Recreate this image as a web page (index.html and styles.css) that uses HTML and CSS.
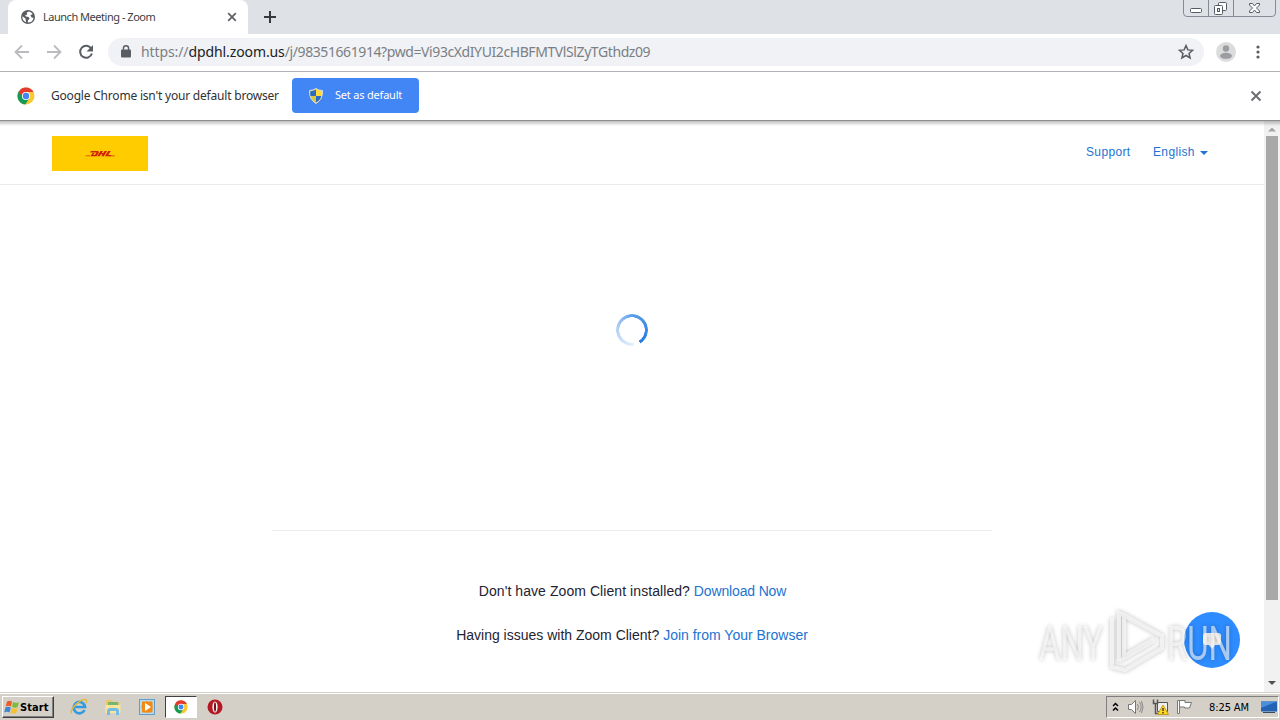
FILE: index.html
```html
<!DOCTYPE html>
<html lang="en">
<head>
    <meta charset="UTF-8">
    <title>Launch Meeting - Zoom</title>
    <link rel="stylesheet" href="styles.css">
</head>
<body>
    <svg class="defs" width="0" height="0">
        <symbol id="chrome" viewBox="0 0 18 18">
            <circle cx="9" cy="9" r="8.5" fill="#fbc834"/>
            <path d="M9 9L1.6 4.7A8.5 8.5 0 0 0 8.3 17.5L12.7 10.8z" fill="#149b58"/>
            <path d="M9 9L5 9.6 1.6 4.7A8.5 8.5 0 0 1 16.5 5H9z" fill="#e33b2e"/>
            <circle cx="9" cy="9" r="4.1" fill="#fff"/>
            <circle cx="9" cy="9" r="3.2" fill="#4285f4"/>
        </symbol>
    </svg>

    <div class="tabstrip">
        <div class="tab">
            <svg width="14" height="14" viewBox="0 0 14 14">
                <circle cx="7" cy="7" r="7" fill="#5a5e63"/>
                <path d="M8 1.4L5.7 2.6 6.3 4.4 4.2 5.2 4.8 6.6 7.7 6.9 8.6 8.7 7 10.2 6.8 12.6A5.7 5.7 0 0 0 12.5 8L10.4 7.3 9.5 5.3 11.7 4A5.6 5.6 0 0 0 8 1.4zM1.4 6.3L4.4 8.5 4.8 10.4 5.2 12.2A5.6 5.6 0 0 1 1.4 6.3z" fill="#fff"/>
            </svg>
            <span class="tab-title">Launch Meeting - Zoom</span>
            <svg class="tab-close" width="10" height="10" viewBox="0 0 10 10"><path d="M1.2 1.2l7.6 7.6M8.8 1.2L1.2 8.8" stroke="#5f6368" stroke-width="1.8"/></svg>
        </div>
        <svg class="new-tab" width="12" height="12" viewBox="0 0 12 12"><path d="M6 0v12M0 6h12" stroke="#36393d" stroke-width="2"/></svg>
        <svg class="window-buttons" width="94" height="18" viewBox="0 0 94 18">
            <path d="M.5 0v13q0 3.5 3.5 3.5h85q3.500 0 3.500-3.500V0M25.500 0v16.500M50.500 0v16.500" fill="none" stroke="#858a95"/>
            <rect x="7.500" y="8.500" width="11" height="4" rx="1" fill="#fff" stroke="#555c66"/>
            <rect x="35.500" y="2.500" width="8" height="8" rx="1" fill="#fff" stroke="#555c66"/>
            <rect x="31.500" y="5.500" width="8" height="9" rx="1" fill="#fff" stroke="#555c66"/>
            <rect x="34.500" y="8.500" width="2" height="3" fill="#dee1e6" stroke="#555c66"/>
            <path d="M66.500 3.500h3l2 2.500 2-2.500h3v1.500l-3 3 3 3v1.500h-3l-2-2.500-2 2.500h-3V11l3-3-3-3z" fill="#fff" stroke="#555c66"/>
        </svg>
    </div>

    <div class="toolbar">
        <svg class="nav-icon" width="16" height="16" viewBox="0 0 16 16"><path d="M15 8H2M8 1.500L1.500 8 8 14.500" fill="none" stroke="#b9bbbe" stroke-width="1.800"/></svg>
        <svg class="nav-icon" width="16" height="16" viewBox="0 0 16 16"><path d="M1 8h13M8 1.500L14.500 8 8 14.500" fill="none" stroke="#b9bbbe" stroke-width="1.800"/></svg>
        <svg class="nav-icon" width="16" height="16" viewBox="0 0 16 16"><path d="M13.200 4.500A6 6 0 1 0 13.900 9.500" fill="none" stroke="#5a5e63" stroke-width="2"/><path d="M15 1v6.500H8.500z" fill="#5a5e63"/></svg>
        <div class="address">
            <svg width="10" height="13" viewBox="0 0 10 13"><rect y="4.500" width="10" height="8" rx="1" fill="#5a5e63"/><path d="M2.400 5V3.400a2.600 2.600 0 0 1 5.200 0V5" fill="none" stroke="#5a5e63" stroke-width="1.400"/></svg>
            <span class="url"><span class="scheme">https://</span><span class="host">dpdhl.zoom.us</span><span class="path">/j/98351661914?pwd=Vi93cXdIYUI2cHBFMTVlSlZyTGthdz09</span></span>
            <svg class="star" width="16" height="16" viewBox="0 0 16 16"><path d="M8 1.600l1.900 4.300 4.600.4-3.500 3.100 1.100 4.600L8 11.500 3.900 14 5 9.400 1.500 6.300l4.600-.4z" fill="none" stroke="#5a5e63" stroke-width="1.500"/></svg>
        </div>
        <svg class="profile" width="20" height="20" viewBox="0 0 20 20"><circle cx="10" cy="10" r="10" fill="#dcdcdd"/><circle cx="10" cy="6.500" r="3.200" fill="#9b9da0"/><ellipse cx="10" cy="13.800" rx="6" ry="3" fill="#9b9da0"/></svg>
        <svg class="menu" width="4" height="14" viewBox="0 0 4 14"><g fill="#5a5e63"><circle cx="2" cy="2" r="1.600"/><circle cx="2" cy="7" r="1.600"/><circle cx="2" cy="12" r="1.600"/></g></svg>
    </div>

    <div class="infobar">
        <svg width="18" height="18"><use href="#chrome"/></svg>
        <span class="info-text">Google Chrome isn't your default browser</span>
        <div class="default-button">
            <svg width="14" height="16" viewBox="0 0 14 16">
                <path d="M7 .5Q9.500 2.500 13.500 2.500 14 11.500 7 15.500 0 11.500.5 2.500 4.500 2.500 7 .5z" fill="#ffdb3b" stroke="#d8dce0"/>
                <path d="M7 1.500V8H1.500Q1 5.500 1.300 3.300 4.500 3.300 7 1.500zM7 8h5.300Q11.400 12 7 14.500z" fill="#2b6bc4"/>
                <path d="M7 8v6.500Q2.500 12 1.700 8z" fill="#d8c743"/>
            </svg>
            <span>Set as default</span>
        </div>
        <svg class="info-close" width="12" height="12" viewBox="0 0 12 12"><path d="M1.500 1.500l9 9M10.500 1.500l-9 9" stroke="#6b6e72" stroke-width="2"/></svg>
    </div>

    <div class="viewport">
        <div class="page">
            <div class="header">
                <div class="logo">
                    <svg width="30" height="6" viewBox="0 0 30 6">
                        <path d="M0 5.200h5l.5-.8H1zM24 5.200h5.500l.5-.8h-6z" fill="#d43a10"/>
                        <path d="M6 0h6.500q2 0 1 2L12 4.400q-.6.900-2 .9H5.500L7.600 2h2L8.300 4h1.600l1.600-2.600H5.200zM15.500 0h2.500l-1.200 2h1.600L19.600 0h2.500l-3.300 5.300h-2.500l1.200-2h-1.600l-1.200 2h-2.500zM23.200 0h2.500l-2.500 4h3.300l-.8 1.300h-5.800z" fill="#d5200b"/>
                    </svg>
                </div>
                <div class="links">
                    <a class="support">Support</a>
                    <a class="language">English</a>
                    <span class="caret"></span>
                </div>
            </div>
            <div class="content">
                <div class="spinner"></div>
                <div class="divider"></div>
                <p class="line download"><span>Don't have Zoom Client installed?</span> <a>Download Now</a></p>
                <p class="line join">Having issues with Zoom Client? <a>Join from Your Browser</a></p>
            </div>
        </div>
        <div class="scrollbar">
            <svg width="16" height="14" viewBox="0 0 16 14"><path d="M4 9.500h8L8 5.500z" fill="#a3a3a3"/></svg>
            <div class="thumb"></div>
            <svg class="arrow-down" width="16" height="17" viewBox="0 0 16 17"><path d="M4 6h8l-4 4z" fill="#505050"/></svg>
        </div>
        <div class="chat">
            <svg width="20" height="19" viewBox="0 0 20 19"><path d="M4 2h12q3 0 3 3v6q0 3-3 3h-3l-3 4-3-4H4q-3 0-3-3V5q0-3 3-3z" fill="#f6f6f5"/><path d="M6 6v5M10 6v5M14 6v5" stroke="#e0dccb"/></svg>
        </div>
        <svg class="watermark" width="206" height="76" viewBox="0 0 206 76">
            <g class="mark">
                <text x="7" y="56" textLength="64" lengthAdjust="spacingAndGlyphs">ANY</text>
                <text x="135" y="56" textLength="65" lengthAdjust="spacingAndGlyphs">RUN</text>
                <path d="M87 57V9L130 32M80 14v49l13 3 37-22V32L92 11v41l30-17M87 57l35-20" fill="none" stroke-width="4"/>
            </g>
        </svg>
    </div>

    <div class="taskbar">
        <div class="start">
            <svg width="16" height="16" viewBox="0 0 16 16">
                <path d="M3 2.500Q5.500 1 8 2.500L7 7.500Q4.500 6 1.700 7.400z" fill="#e95d28"/>
                <path d="M9 3q2.500 1.400 6 .2L13.700 8Q11 9.300 8 7.900z" fill="#7ebc3b"/>
                <path d="M1.500 8.500Q4 7 6.800 8.500L5.500 13.500Q3 12.200.2 13.500z" fill="#3c86d2"/>
                <path d="M7.800 9q2.700 1.300 5.700.1L12.200 14q-3 1.200-5.700-.2z" fill="#f5c22e"/>
            </svg>
            <span>Start</span>
        </div>
        <div class="task ie">
            <svg width="18" height="18" viewBox="0 0 18 18">
                <path d="M14.500 12A5.700 5.700 0 1 1 15 9H5" fill="none" stroke="#329be0" stroke-width="2.700"/>
                <path d="M1.500 15.500C-1 11 12-.5 16.200 2q1 .8 0 3" fill="none" stroke="#e1b83c" stroke-width="1.400"/>
            </svg>
        </div>
        <div class="task">
            <svg width="18" height="18" viewBox="0 0 18 18">
                <path d="M2 3l1-1h5l1 2h7v10H2z" fill="#ecc866"/>
                <path d="M4 4h10v4H4z" fill="#79b66d"/>
                <path d="M1.500 7h15v8h-15z" fill="#f9e59c"/>
                <path d="M3 17v-4q0-3 3-3h6q3 0 3 3v4h-3v-4H6v4z" fill="#75bce4"/>
            </svg>
        </div>
        <div class="task">
            <svg width="18" height="18" viewBox="0 0 18 18">
                <rect x="1.500" y="1.500" width="15" height="15" fill="#b7dcef" stroke="#5f9ecb"/>
                <rect x="4" y="3.500" width="10.500" height="11" fill="#f28a16"/>
                <circle cx="9" cy="9" r="5.500" fill="#f28a16"/><path d="M7 5v8L13 9z" fill="#fff"/>
            </svg>
        </div>
        <div class="task active"><svg width="14" height="14"><use href="#chrome"/></svg></div>
        <div class="task">
            <svg width="16" height="16" viewBox="0 0 16 16"><circle cx="8" cy="8" r="7.500" fill="#b41923"/><ellipse cx="8" cy="8" rx="2.600" ry="5.500" fill="#fff"/><ellipse cx="8" cy="8" rx="1.100" ry="4.800" fill="#77131a"/></svg>
        </div>
        <div class="tray">
            <svg class="expand" width="7" height="10" viewBox="0 0 7 10"><path d="M1 4l2.500-2.500L6 4M1 8.500L3.500 6 6 8.500" fill="none" stroke="#000" stroke-width="1.500"/></svg>
            <svg class="sound" width="17" height="16" viewBox="0 0 17 16"><path d="M1.500 5.500h3L8.500 1.500v13l-4-4h-3z" fill="#fff" stroke="#777"/><path d="M10.500 5q1.800 3 0 6M12.500 3q3.300 5 0 10M14.500 2q3 6 0 12" fill="none" stroke="#888"/></svg>
            <svg class="network" width="17" height="16" viewBox="0 0 17 16"><path d="M5.500 3.500h10v9h-10z" fill="#efefef" stroke="#555"/><path d="M1.500.5v4h4v-4M3.500 4.500v10h3" fill="none" stroke="#555" stroke-width="1.500"/><path d="M11 6l5.500 9.500h-11z" fill="#ffd928" stroke="#c69c17"/><path d="M11 9v3M11 13v1.500" stroke="#222" stroke-width="1.300"/></svg>
            <svg class="flag" width="17" height="16" viewBox="0 0 17 16"><path d="M1.500 1.500h2v13h-2z" fill="#fff" stroke="#777"/><path d="M3.500 1.500h5.500v2h6.500l-2 5.500H8.500V8h-5z" fill="#fff" stroke="#777"/></svg>
            <span class="clock">8:25 AM</span>
            <svg class="desktop" width="16" height="14" viewBox="0 0 16 14"><path d="M0 1.500h16v10H0z" fill="#2362b5"/><path d="M0 1.500h16L0 8z" fill="#4b8eda"/><path d="M2 12.500h12" stroke="#38495f"/></svg>
        </div>
    </div>
</body>
</html>
```
FILE: styles.css
```css
* { box-sizing: border-box; }
body {
    display: flex;
    flex-direction: column;
    width: 1280px;
    height: 720px;
    margin: 0;
    overflow: hidden;
    background: #fff;
    font-family: "Noto Sans", sans-serif;
    white-space: nowrap;
}
svg { display: block; flex: none; overflow: visible; }
.defs { position: absolute; }

/* browser */
.tabstrip {
    display: flex;
    height: 34px;
    padding-left: 8px;
    background: #dee1e6;
}
.tab {
    display: flex;
    align-items: center;
    width: 240px;
    height: 34px;
    padding: 0 11px 0 13px;
    border-radius: 8px 8px 0 0;
    background: #fff;
}
.tab-title {
    margin: -2px 0 0 8px;
    color: #3c4043;
    font-size: 11px;
    letter-spacing: -0.48px;
}
.tab-close { margin-left: auto; }
.new-tab { margin: 11px 0 0 16px; }
.window-buttons { margin-left: auto; margin-right: 3px; }
.toolbar {
    display: flex;
    align-items: center;
    height: 38px;
    padding: 0 20px 2px 14px;
    border-bottom: 1px solid #b1b3b7;
}
.nav-icon { margin-right: 16px; }
.nav-icon:nth-child(3) { margin-right: 14px; }
.address {
    display: flex;
    align-items: center;
    width: 1096px;
    height: 28px;
    padding: 0 10px 0 13px;
    border-radius: 14px;
    background: #f0f2f5;
}
.url {
    margin-left: 10px;
    color: #7b7f84;
    font-size: 14px;
    letter-spacing: -0.1px;
}
.host { color: #202124; }
.path { letter-spacing: -0.41px; }
.star { margin-left: auto; }
.profile { margin-left: 12px; }
.menu { margin-left: auto; }
.infobar {
    display: flex;
    align-items: center;
    height: 49px;
    padding: 0 18px 1px 17px;
    border-bottom: 1px solid #8d8d8d;
}
.info-text {
    width: 229px;
    margin: 0 12px 0 16px;
    color: #303134;
    font-size: 12px;
    letter-spacing: -0.2px;
}
.default-button {
    display: flex;
    align-items: center;
    width: 127px;
    height: 35px;
    padding-left: 17px;
    border-radius: 4px;
    background: #4285f4;
    color: #fff;
    font-size: 11px;
}
.default-button span { margin: -2px 0 0 12px; letter-spacing: -0.2px; }
.info-close { margin-left: auto; }

/* meeting page */
.viewport {
    display: flex;
    position: relative;
    height: 571px;
    font-family: "Liberation Sans", Arial, sans-serif;
}
.viewport::before {
    content: "";
    position: absolute;
    width: 100%;
    height: 5px;
    background: linear-gradient(rgba(0, 0, 0, 0.25), rgba(0, 0, 0, 0));
}
.page { width: 1264px; }
.header {
    display: flex;
    align-items: center;
    justify-content: space-between;
    height: 64px;
    padding: 0 56px 0 52px;
    border-bottom: 1px solid #ebebeb;
}
.logo {
    display: flex;
    align-items: center;
    justify-content: center;
    width: 96px;
    height: 35px;
    margin-top: 1px;
    padding-top: 1px;
    background: #fc0;
}
.links {
    display: flex;
    align-items: center;
    margin-top: -1px;
    font-size: 12px;
    letter-spacing: 0.35px;
}
a { color: #2173d0; }
.support { width: 67px; }
.language { width: 47px; }
.caret {
    border: 4px solid transparent;
    border-top-color: #2173d0;
    border-bottom: 0;
    margin-top: 2px;
}
.content {
    display: flex;
    flex-direction: column;
    align-items: center;
    padding-top: 129px;
}
.spinner {
    width: 32px;
    height: 32px;
    border-radius: 50%;
    background: conic-gradient(#5a9fea, #267be1 148deg, transparent 149deg 172deg, #e5effb 175deg, #a9cbf3 290deg, #5a9fea);
    mask: radial-gradient(circle, transparent 12.5px, #000 13px);
}
.divider {
    width: 720px;
    height: 1px;
    margin-top: 184px;
    background: #ededed;
}
.line {
    margin: 0;
    color: #232333;
    font-size: 14px;
    line-height: 20px;
}
.download { margin-top: 50px; padding-left: 1px; }
.download span { letter-spacing: 0.07px; }
.download a { letter-spacing: -0.15px; }
.join { margin-top: 24px; }
.scrollbar {
    display: flex;
    flex-direction: column;
    align-items: center;
    width: 16px;
    padding-top: 1px;
    background: #f1f1f1;
}
.thumb {
    width: 12px;
    height: 464px;
    background: #a8a8a8;
}
.arrow-down { margin-top: auto; }
.chat {
    display: flex;
    align-items: center;
    justify-content: center;
    position: absolute;
    left: 1184px;
    top: 491px;
    width: 56px;
    height: 56px;
    border-radius: 50%;
    background: #2d8cff;
}
.watermark {
    position: absolute;
    left: 1032px;
    top: 483px;
}
.mark {
    fill: rgba(255, 255, 255, 0.6);
    filter: drop-shadow(0 0 2px rgba(0, 0, 0, 0.4));
    font-family: Roboto, sans-serif;
    font-size: 49px;
}
.mark path { stroke: rgba(255, 255, 255, 0.65); }

/* taskbar */
.taskbar {
    display: flex;
    align-items: center;
    height: 28px;
    padding: 1px 0 0 2px;
    border-top: 1px solid #d4d0c8;
    background: #d4d0c8;
    box-shadow: inset 0 1px #fff;
    font-family: "DejaVu Sans Condensed", sans-serif;
    font-size: 11px;
    color: #000;
}
.start {
    display: flex;
    align-items: center;
    width: 52px;
    height: 22px;
    margin-right: 10px;
    padding-left: 1px;
    border: 1px solid;
    border-color: #fff #404040 #404040 #fff;
    box-shadow: inset -1px -1px #808080;
    font-weight: bold;
}
.start span { letter-spacing: 0.1px; }
.task {
    display: flex;
    align-items: center;
    justify-content: center;
    width: 32px;
    height: 22px;
    margin-right: 2px;
}
.ie { width: 30px; margin-right: 3px; }
.active {
    width: 32px;
    border: 1px solid;
    border-color: #404040 #fff #fff #404040;
    background: #fff;
}
.tray {
    display: flex;
    align-items: center;
    width: 173px;
    height: 22px;
    margin-left: auto;
    margin-right: 1px;
    padding-left: 5px;
    border: 1px solid;
    border-color: #808080 #fff #fff #808080;
}
.sound { margin-left: 8px; }
.network { margin-left: 8px; }
.flag { margin-left: 7px; }
.clock { width: 43px; margin-left: 16px; letter-spacing: -0.1px; }
.desktop { margin-left: auto; margin-right: 1px; }
```
